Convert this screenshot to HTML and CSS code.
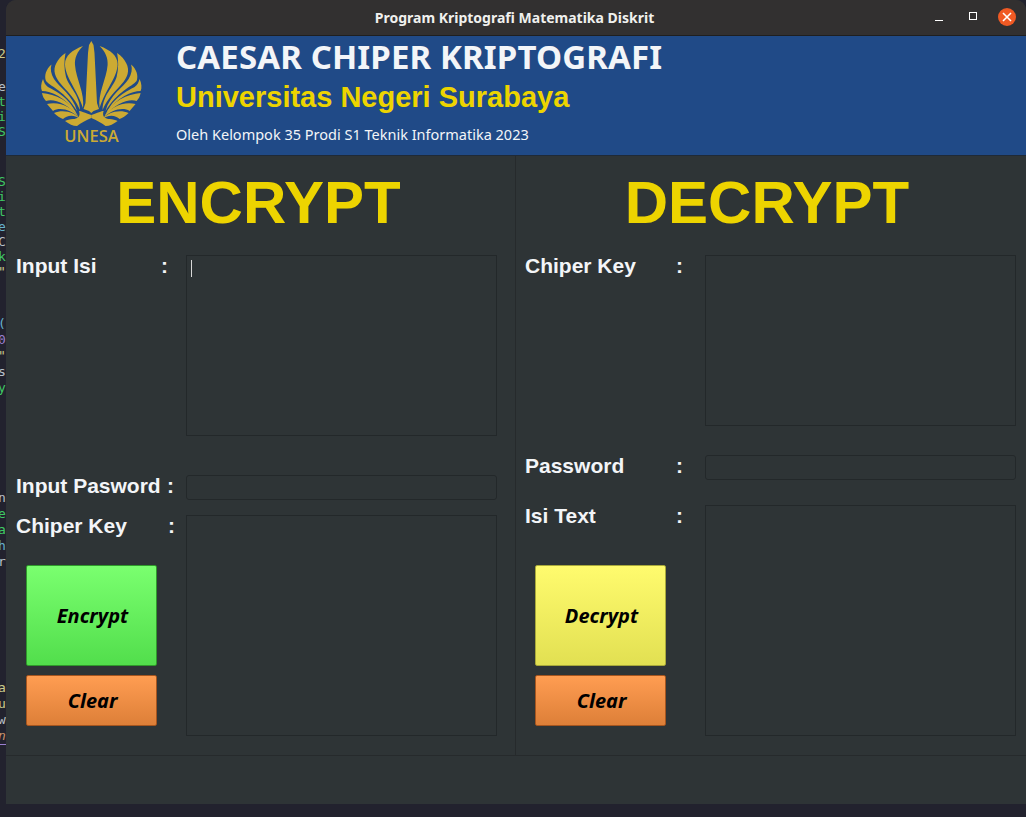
FILE: index.html
```html
<!DOCTYPE html>
<html lang="en">
<head>
    <meta charset="UTF-8">
    <title>Program Kriptografi Matematika Diskrit</title>
    <link rel="stylesheet" href="styles.css">
</head>
<body>
    <div class="desktop">
        <!-- editor behind the window, only the last column shows -->
        <div class="code-strip">
            <div class="code-group g1"><div class="c-cream">2</div></div>
            <div class="code-group g2">
                <div class="c-grey">e</div>
                <div class="c-green">t</div>
                <div class="c-green">i</div>
                <div class="c-green">S</div>
            </div>
            <div class="code-group g3">
                <div class="c-green">S</div>
                <div class="c-green">i</div>
                <div class="c-green">t</div>
                <div class="c-blue">e</div>
                <div class="c-grey">C</div>
                <div class="c-green">k</div>
                <div class="c-cream">"</div>
            </div>
            <div class="code-group g4">
                <div class="c-blue">(</div>
                <div class="c-purple">0</div>
                <div class="c-cream">"</div>
                <div class="c-grey">s</div>
                <div class="c-green">y</div>
            </div>
            <div class="code-group g5">
                <div class="c-grey">n</div>
                <div class="c-green">e</div>
                <div class="c-green">a</div>
                <div class="c-blue">h</div>
                <div class="c-grey">r</div>
            </div>
            <div class="code-group g6">
                <div class="c-cream">a</div>
                <div class="c-cream">u</div>
                <div class="c-grey">w</div>
                <div class="c-orange">n</div>
            </div>
        </div>
        <div class="window">
            <div class="titlebar">
                <div class="title">Program Kriptografi Matematika Diskrit</div>
                <div class="win-controls">
                    <span class="win-min"></span>
                    <span class="win-max"></span>
                    <span class="win-close">
                        <svg width="10" height="10" viewBox="0 0 10 10"><path d="M1 1L9 9M9 1L1 9" stroke="#fff" stroke-width="1.6"/></svg>
                    </span>
                </div>
            </div>
            <header class="banner">
                <svg class="logo" width="104" height="108" viewBox="0 0 104 108">
                    <g fill="#ccaa33">
                        <path d="M52.3 0L54.5 4L55.5 12L58 62L60 68L54.5 70L52.3 72L50 70L44.5 68L46.5 62L49 12L50 4Z"/>
                        <g>
                            <path d="M44 5C33 9 26 15 26 23C26 36 38 48 44 67C46 52 37 38 36 24C35.5 17 38 11 44 5Z"/>
                            <path d="M26.5 12C18 18 14 26 16 33C19 44 34 52 41 69C41 54 30 46 27 36C25 28 25 20 26.5 12Z"/>
                            <path d="M12.5 23.5C7 28 5 35 7 40C12 46 26 50 38 70C34 54 20 46 15 38C12 33 11 28 12.5 23.5Z"/>
                            <path d="M4 38C2 42 1.5 47 3 50C12 50 26 56 37 72C30 56 16 50 9 46C6 44 5 41 4 38Z"/>
                            <path d="M3 52C3.5 55 5 58 7 60C14 57 28 62 39 75C32 60 16 53 3 52Z"/>
                            <path d="M8 63C10 65 12 68 14 70C20 66 32 68 40 77C34 66 20 60 8 63Z"/>
                            <path d="M15 72C18 75 21 77 24 78C28 74 36 73 42 79C36 71 24 68 15 72Z"/>
                            <path d="M26 80C30 83 34 85 38 85C42 82 47 79 52.3 77L52.3 74C46 72 42 70 40 70C42 76 38 78 34 78C31 78 28 79 26 80Z"/>
                        </g>
                        <g transform="matrix(-1 0 0 1 104.6 0)">
                            <path d="M44 5C33 9 26 15 26 23C26 36 38 48 44 67C46 52 37 38 36 24C35.5 17 38 11 44 5Z"/>
                            <path d="M26.5 12C18 18 14 26 16 33C19 44 34 52 41 69C41 54 30 46 27 36C25 28 25 20 26.5 12Z"/>
                            <path d="M12.5 23.5C7 28 5 35 7 40C12 46 26 50 38 70C34 54 20 46 15 38C12 33 11 28 12.5 23.5Z"/>
                            <path d="M4 38C2 42 1.5 47 3 50C12 50 26 56 37 72C30 56 16 50 9 46C6 44 5 41 4 38Z"/>
                            <path d="M3 52C3.5 55 5 58 7 60C14 57 28 62 39 75C32 60 16 53 3 52Z"/>
                            <path d="M8 63C10 65 12 68 14 70C20 66 32 68 40 77C34 66 20 60 8 63Z"/>
                            <path d="M15 72C18 75 21 77 24 78C28 74 36 73 42 79C36 71 24 68 15 72Z"/>
                            <path d="M26 80C30 83 34 85 38 85C42 82 47 79 52.3 77L52.3 74C46 72 42 70 40 70C42 76 38 78 34 78C31 78 28 79 26 80Z"/>
                        </g>
                        <text x="52.5" y="101" text-anchor="middle" class="logo-text">UNESA</text>
                    </g>
                </svg>
                <div class="banner-text">
                    <h1>CAESAR CHIPER KRIPTOGRAFI</h1>
                    <h2>Universitas Negeri Surabaya</h2>
                    <p>Oleh Kelompok 35 Prodi S1 Teknik Informatika 2023</p>
                </div>
            </header>
            <main class="panels">
                <section class="panel panel-enc">
                    <h3>ENCRYPT</h3>
                    <div class="row">
                        <label class="lbl lbl-isi"><span>Input Isi</span><span>:</span></label>
                        <div class="box box-isi"><span class="caret"></span></div>
                    </div>
                    <div class="row row-pass">
                        <label class="lbl"><span>Input Pasword</span><span>:</span></label>
                        <div class="box box-line"></div>
                    </div>
                    <div class="row row-out">
                        <div class="side">
                            <label class="lbl lbl-key"><span>Chiper Key</span><span>:</span></label>
                            <button class="btn btn-main btn-green">Encrypt</button>
                            <button class="btn btn-clear">Clear</button>
                        </div>
                        <div class="box box-out"></div>
                    </div>
                </section>
                <section class="panel panel-dec">
                    <h3>DECRYPT</h3>
                    <div class="row">
                        <label class="lbl"><span>Chiper Key</span><span>:</span></label>
                        <div class="box box-key"></div>
                    </div>
                    <div class="row row-pass2">
                        <label class="lbl"><span>Password</span><span>:</span></label>
                        <div class="box box-line"></div>
                    </div>
                    <div class="row row-out2">
                        <div class="side">
                            <label class="lbl"><span>Isi Text</span><span>:</span></label>
                            <button class="btn btn-main btn-yellow">Decrypt</button>
                            <button class="btn btn-clear">Clear</button>
                        </div>
                        <div class="box box-out"></div>
                    </div>
                </section>
            </main>
            <footer class="statusbar"></footer>
        </div>
    </div>
</body>
</html>
```
FILE: styles.css
```css
body { margin: 0; background: #22222e; font-family: "Liberation Sans", Arial, sans-serif; overflow: hidden; }
.desktop { display: flex; width: 1026px; height: 817px; }
.window { flex: 1; height: 804px; background: #2e3436; display: flex; flex-direction: column; border-radius: 10px 10px 0 0; overflow: hidden; }

/* editor text behind the window */
.code-strip { width: 6px; flex-shrink: 0; overflow: hidden; font: 13px/16px "DejaVu Sans Mono", monospace; }
.code-group div { margin-left: -2px; }
.g1 { margin-top: 46px; }
.g2 { margin-top: 17px; line-height: 15px; }
.g3 { margin-top: 35px; line-height: 15px; }
.g4 { margin-top: 37px; }
.g5 { margin-top: 94px; }
.g6 { margin-top: 110px; }
.c-cream { color: #c9c98a; }
.c-grey { color: #b8c0c8; }
.c-green { color: #3fc864; }
.c-blue { color: #66b2cc; }
.c-purple { color: #9a7fd0; }
.c-orange { color: #c8926a; font-style: italic; border-bottom: 1px solid #9a7fd0; }

.titlebar { height: 35px; background: #323030; border-bottom: 1px solid #1f1f1f; position: relative; display: flex; align-items: center; justify-content: center; flex-shrink: 0; }
.title { color: #f0f0ee; font: bold 14px "Noto Sans", sans-serif; margin-left: -3px; }
.win-controls { position: absolute; right: 10px; top: 8px; display: flex; align-items: center; }
.win-min { width: 8px; height: 1px; background: #fff; margin: 6px 26px 0 0; }
.win-max { width: 6px; height: 6px; border: 1px solid #fff; margin: -2px 21px 0 0; }
.win-close { width: 18px; height: 18px; border-radius: 50%; background: #f05a24; display: flex; align-items: center; justify-content: center; }

.banner { height: 119px; background: #204a87; border-bottom: 1px solid #1f2a38; display: flex; flex-shrink: 0; }
.logo { margin: 5px 0 0 33px; }
.logo-text { font: 600 16.5px "Open Sans", sans-serif; }
.banner-text { margin-left: 33px; }
.banner-text h1 { margin: 2px 0 0; color: #f3f5f8; font: bold 33px/38px "Noto Sans", sans-serif; letter-spacing: 0.13px; }
.banner-text h2 { margin: 4px 0 0; color: #edd400; font: bold 29px/34px "Liberation Sans", sans-serif; }
.banner-text p { margin: 11px 0 0; color: #f3f5f8; font: 14.5px/18px "Noto Sans", sans-serif; }

.panels { display: flex; flex: 1; border-bottom: 1px solid #262a2c; }
.panel { box-sizing: border-box; }
.panel-enc { width: 510px; padding: 0 10px; border-right: 1px solid #262a2c; }
.panel-dec { flex: 1; padding: 0 10px 0 9px; }
.panel h3 { margin: 0; height: 99px; color: #edd400; font: bold 60px/94px "Liberation Sans", sans-serif; text-align: center; }
.panel-enc h3 { padding-right: 4px; }
.panel-dec h3 { padding-right: 7px; }

.row { display: flex; align-items: flex-start; }
.row-pass { margin-top: 39px; }
.row-out { margin-top: 15px; }
.row-pass2 { margin-top: 29px; }
.row-out2 { margin-top: 25px; }

.lbl { width: 170px; flex-shrink: 0; box-sizing: border-box; margin-top: -1px; padding-right: 12px; display: flex; justify-content: space-between; color: #f3f5f8; font: bold 21px/24px "Liberation Sans", sans-serif; }
.lbl-isi { padding-right: 18px; }
.lbl-key { padding-right: 11px; }
.panel-dec .lbl { width: 180px; padding-right: 22px; }
.side { width: 170px; flex-shrink: 0; }
.side .lbl { margin-bottom: 27px; }
.panel-dec .side { width: 180px; }
.panel-dec .side .lbl { margin-bottom: 37px; }

.box { flex: none; width: 311px; box-sizing: border-box; border: 1px solid #23282a; }
.box-isi { height: 181px; padding: 4px; }
.box-line { height: 25px; border-radius: 3px; }
.box-out { height: 221px; }
.panel-dec .box-out { height: 231px; }
.box-key { height: 171px; }
.caret { display: block; width: 1px; height: 17px; background: #d8d8d8; }

.btn { display: block; width: 131px; margin-left: 10px; padding: 0 0 0 2px; border-radius: 2px; color: #000; font: italic bold 20px "Noto Sans", sans-serif; }
.btn-main { height: 101px; }
.btn-clear { height: 51px; margin-top: 9px; background: linear-gradient(#ff9d52, #dd7f38); border: 1px solid #a5551f; }
.btn-green { background: linear-gradient(#7aff6f, #52de4c); border: 1px solid #2f9a2b; }
.btn-yellow { background: linear-gradient(#fffb6e, #e2e052); border: 1px solid #a8a83a; }

.statusbar { height: 48px; flex-shrink: 0; }
```
